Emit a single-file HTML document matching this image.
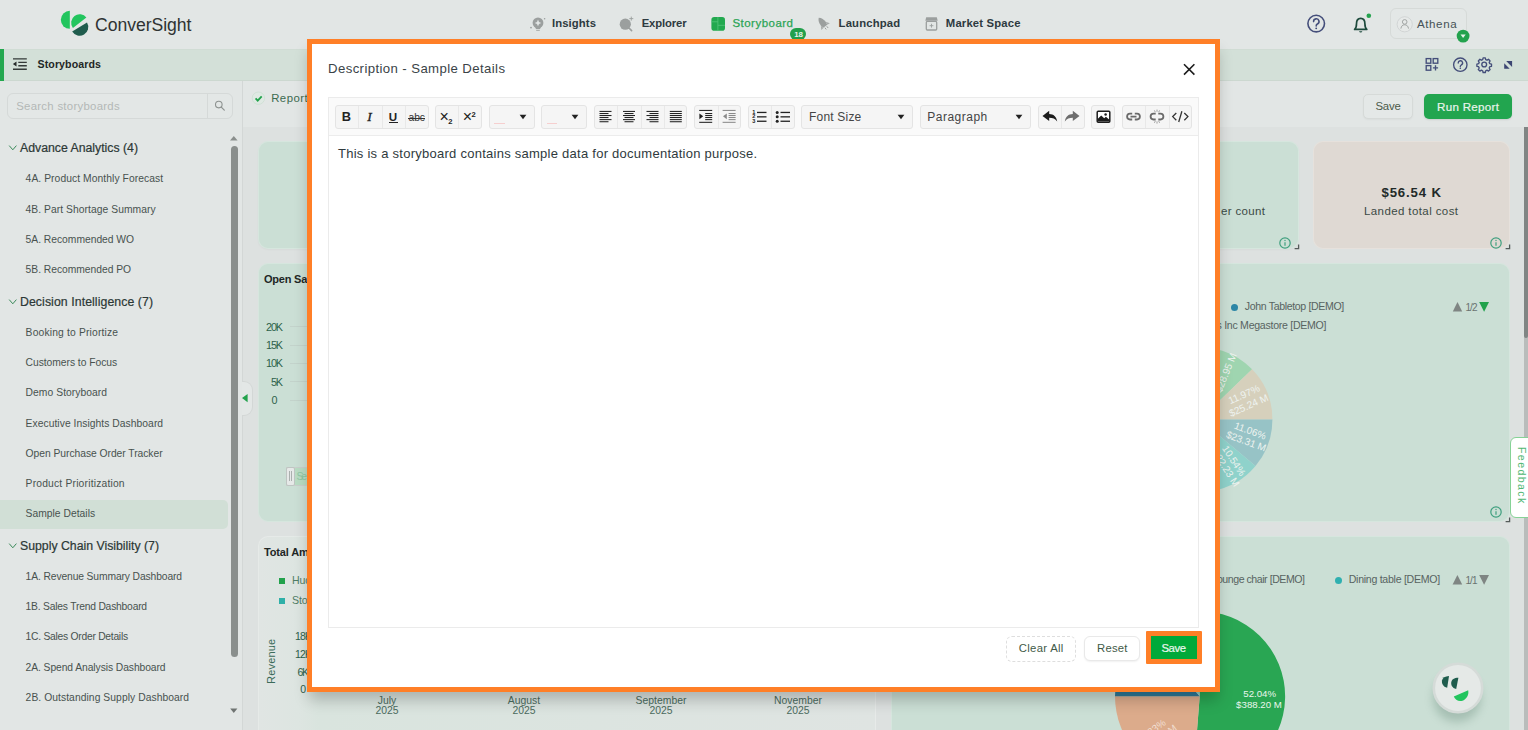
<!DOCTYPE html>
<html><head><meta charset="utf-8"><title>ConverSight</title>
<style>
*{box-sizing:border-box;margin:0;padding:0}
html,body{width:1528px;height:730px;overflow:hidden}
body{font-family:"Liberation Sans",sans-serif;background:#e2e6e5;color:#3a4340;position:relative}
.abs{position:absolute}
.t{position:absolute;white-space:nowrap;line-height:1}
svg{position:absolute;overflow:visible}
#hdr{left:0;top:0;width:1528px;height:48px;background:#e2e6e5}
#sub{left:0;top:48.600px;width:1528px;height:32px;background:#d3e0d8;border-top:1px solid #d0dcd4;border-bottom:1px solid #ccd8d0}
#sub .strip{left:0;top:-1px;width:4px;height:32px;background:#23a84f}
#side{left:0;top:80.600px;width:243px;height:650px;background:#e2e6e5;border-right:1px solid #d3d7d6}
#canvas{left:243px;top:127px;width:1285px;height:603px;background:#dde1e0}
.card{position:absolute;background:#cbdfd5;border-radius:10px;border:1px solid rgba(255,255,255,.22)}
.tb{position:absolute;top:105px;height:23.500px;background:#f5f5f5;border:1px solid #e4e4e4;border-radius:3px}
.tb i{position:absolute;top:0;width:1px;height:22px;background:#e8e8e8}
</style></head><body>
<div id="hdr" class="abs"></div>
<div id="sub" class="abs"><div class="strip abs"></div></div>
<div id="side" class="abs"></div>
<div id="canvas" class="abs"></div>
<svg style="left:58px;top:8px" width="32" height="32" viewBox="58 8 32 32">
<path d="M69.8 10.8 A9 9 0 0 0 69.8 28.8 Z" fill="#22c55e"/>
<path d="M72.9 27.9 A8 8 0 0 1 86.4 17.6 Z" fill="#22c55e"/>
<path d="M87.0 22.6 A8 8 0 0 1 72.2 31.5 Z" fill="#1f5c4d"/>
</svg>
<div class="t " style="left:95.00px;top:17.00px;font-size:17.6px;color:#2f3333;letter-spacing:-0.033px;">ConverSight</div>
<svg style="left:528px;top:14px" width="20" height="20" viewBox="528 14 20 20">
<circle cx="538" cy="22.900" r="5.400" fill="#9b9f9e"/><path d="M535.200 26.500h5.600l-.7 2.500h-4.200z" fill="#9b9f9e"/><path d="M536.200 30.300h3.600" stroke="#9b9f9e" stroke-width=".9"/>
<path d="M538 19.600l1 2.300 2.300 1-2.300 1-1 2.300-1-2.300-2.300-1 2.300-1z" fill="#e2e6e5"/>
<circle cx="531" cy="27.600" r=".9" fill="#9b9f9e"/><circle cx="544.600" cy="18.700" r=".8" fill="#9b9f9e"/>
</svg>
<div class="t " style="left:552.00px;top:18.00px;font-size:11.3px;color:#2e3a40;font-weight:bold;letter-spacing:0.098px;">Insights</div>
<svg style="left:617px;top:14px" width="20" height="20" viewBox="617 14 20 20">
<circle cx="625.3" cy="24.2" r="5.6" fill="#9b9f9e"/><path d="M629 28l2.6 2.6" stroke="#9b9f9e" stroke-width="1.6" stroke-linecap="round"/>
<path d="M631.3 16.6v4M629.3 18.6h4" stroke="#9b9f9e" stroke-width=".9"/>
</svg>
<div class="t " style="left:641.70px;top:18.00px;font-size:11.3px;color:#2e3a40;font-weight:bold;letter-spacing:-0.121px;">Explorer</div>
<svg style="left:710.5px;top:17px" width="14" height="14" viewBox="0 0 14 14">
<rect x=".4" y=".1" width="13.6" height="13.6" rx="2.8" fill="#22a94f"/>
<path d="M6.9 .1v13.6M.4 4.800h6.500M6.900 8.300h7.100" stroke="#55c57b" stroke-width=".8"/>
</svg>
<div class="t " style="left:732.40px;top:18.00px;font-size:11.5px;color:#2aa455;letter-spacing:0.482px;-webkit-text-stroke:.25px #2aa455;">Storyboard</div>
<div class="abs" style="left:790.300px;top:27.800px;width:16.200px;height:12.500px;border-radius:6.200px;background:#22a04c"></div>
<div class="t " style="left:794.20px;top:31.00px;font-size:7.9px;color:#e8f3ec;font-weight:bold;letter-spacing:-0.181px;">18</div>
<svg style="left:816px;top:15px" width="16" height="16" viewBox="816 15 16 16">
<g transform="rotate(-38 823.500 24)"><path d="M823.500 16.200c2.300 1.900 3.100 4.600 3.100 7.400l-.6 3.200h-5l-.6-3.200c0-2.800.8-5.500 3.100-7.400z" fill="#9b9f9e"/>
<path d="M820.400 23.600l-2.300 3.800 2.900-.4zM826.600 23.600l2.300 3.800-2.900-.4z" fill="#a9adac"/>
<path d="M822.300 27.800v2.200M824.700 27.800v2.200" stroke="#9b9f9e" stroke-width=".9"/></g>
</svg>
<div class="t " style="left:838.60px;top:18.00px;font-size:11.3px;color:#2e3a40;font-weight:bold;letter-spacing:0.167px;">Launchpad</div>
<svg style="left:924px;top:15px" width="16" height="18" viewBox="924 15 16 18">
<path d="M926.200 17.300h10.600l.9 3.400h-12.400z" fill="#9b9f9e"/>
<rect x="926.300" y="21.400" width="10.400" height="8.600" rx="1" fill="none" stroke="#9b9f9e" stroke-width="1.300"/>
<path d="M931.500 23.800v3.800M929.600 25.700h3.800" stroke="#9b9f9e" stroke-width=".9"/>
</svg>
<div class="t " style="left:945.80px;top:18.00px;font-size:11.3px;color:#2e3a40;font-weight:bold;letter-spacing:0.169px;">Market Space</div>
<svg style="left:1305px;top:12px" width="24" height="24" viewBox="1305 12 24 24">
<circle cx="1316.200" cy="23.600" r="8.300" fill="none" stroke="#444e7a" stroke-width="1.600"/>
<path d="M1313.600 21.600a2.700 2.700 0 1 1 3.800 2.400c-.9.500-1.200 1-1.200 1.900" fill="none" stroke="#444e7a" stroke-width="1.600" stroke-linecap="round"/>
<circle cx="1316.200" cy="28.300" r=".9" fill="#3c4672"/>
</svg>
<svg style="left:1350px;top:10px" width="24" height="26" viewBox="1350 10 24 26">
<path d="M1354.600 29.400c1.600-1.300 1.900-2.600 1.900-5.600 0-3.300 1.700-5.400 4.200-5.400s4.200 2.100 4.200 5.400c0 3 .3 4.300 1.900 5.600z" fill="none" stroke="#1d4a3c" stroke-width="1.700" stroke-linejoin="round"/>
<path d="M1359 31.200a1.800 1.800 0 0 0 3.400 0z" fill="#1d4a3c"/>
<circle cx="1368.800" cy="15.800" r="2.300" fill="#23a24d"/>
</svg>
<div class="abs" style="left:1390px;top:8px;width:77px;height:31px;border:1px solid #d6dad8;border-radius:6px;background:#e3e7e6"></div>
<svg style="left:1396px;top:15px" width="18" height="18" viewBox="1396 15 18 18">
<circle cx="1404.700" cy="24.300" r="7.600" fill="#e6e9e8" stroke="#cfd3d2" stroke-width=".9"/>
<circle cx="1404.700" cy="21.900" r="2.300" fill="none" stroke="#9a9e9d" stroke-width=".9"/>
<path d="M1400.900 28.600c.3-2.600 1.800-3.800 3.800-3.800s3.500 1.200 3.800 3.800" fill="none" stroke="#9a9e9d" stroke-width=".9"/>
</svg>
<div class="t " style="left:1417.00px;top:18.00px;font-size:11.6px;color:#465256;letter-spacing:0.570px;">Athena</div>
<svg style="left:1456px;top:29px" width="14" height="14" viewBox="1456 29 14 14">
<circle cx="1463.100" cy="36.100" r="6.400" fill="#23a24d"/><path d="M1460.500 34.400h5.200l-2.600 3.700z" fill="#e8f3ec"/>
</svg>
<svg style="left:11px;top:56px" width="18" height="16" viewBox="11 56 18 16">
<path d="M13 58.800h13.800M18.300 62.300h8.500M18.300 65.700h8.500M13 69.200h13.800" stroke="#353a39" stroke-width="1.350"/>
<path d="M16.500 61.400v5.200l-3.600-2.600z" fill="#262b2a"/>
</svg>
<div class="t " style="left:37.50px;top:59.00px;font-size:10.6px;color:#1f2726;font-weight:bold;letter-spacing:0.109px;">Storyboards</div>
<svg style="left:1424px;top:56px" width="96" height="18" viewBox="1424 56 96 18">
<g fill="none" stroke="#444e7a" stroke-width="1.350">
<rect x="1426.200" y="58.600" width="4.600" height="4.600"/><rect x="1433.200" y="58.600" width="4.600" height="4.600"/><rect x="1426.200" y="65.600" width="4.600" height="4.600"/>
<path d="M1435.500 65.300v5.200M1432.900 67.900h5.200"/>
<circle cx="1460.300" cy="64.700" r="6.700"/>
<path d="M1458.200 63a2.200 2.200 0 1 1 3 2c-.7.400-.9.800-.9 1.500" stroke-linecap="round"/>
<circle cx="1484.200" cy="64.500" r="2.400"/>
<path d="M1483.100 57.900h2.200l.4 1.700 1.300.6 1.500-.9 1.600 1.600-.9 1.500.6 1.300 1.700.4v2.200l-1.700.4-.6 1.300.9 1.500-1.600 1.600-1.500-.9-1.300.6-.4 1.700h-2.200l-.4-1.700-1.300-.6-1.500.9-1.600-1.600.9-1.500-.6-1.300-1.700-.4v-2.200l1.700-.4.600-1.300-.9-1.500 1.600-1.600 1.500.9 1.300-.6z" stroke-linejoin="round"/>
</g>
<circle cx="1460.300" cy="68.300" r=".8" fill="#3c4672"/>
<path d="M1506.200 61h5.900v5.900zM1504.200 63.200v5.500h5.500z" fill="#3c4672"/>
</svg>
<div class="abs" style="left:7px;top:93px;width:225.500px;height:26px;border:1px solid #d5d9d8;border-radius:6px;background:#e3e7e6"></div>
<div class="abs" style="left:207px;top:94px;width:1px;height:24px;background:#d5d9d8"></div>
<div class="t " style="left:16.20px;top:101.00px;font-size:11.4px;color:#b3b8b6;letter-spacing:0.278px;">Search storyboards</div>
<svg style="left:213px;top:99px" width="14" height="14" viewBox="213 99 14 14">
<circle cx="218.800" cy="104.600" r="3.300" fill="none" stroke="#8d9290" stroke-width="1.100"/><path d="M221.300 107.100l3 3" stroke="#8d9290" stroke-width="1.200" stroke-linecap="round"/></svg>
<div class="abs" style="left:0;top:500px;width:228px;height:29px;background:#d1dfd6;border-radius:0 5px 5px 0"></div>
<svg style="left:8px;top:144px" width="10" height="8" viewBox="0 0 10 8"><path d="M1.200 1.600l3.600 4.200 3.600-4.200" fill="none" stroke="#3a8a5a" stroke-width="1"/></svg>
<div class="t " style="left:20.00px;top:142.00px;font-size:12.3px;color:#2c3836;letter-spacing:-0.013px;-webkit-text-stroke:.2px #2c3836;">Advance Analytics (4)</div>
<svg style="left:8px;top:298px" width="10" height="8" viewBox="0 0 10 8"><path d="M1.200 1.600l3.600 4.200 3.600-4.200" fill="none" stroke="#3a8a5a" stroke-width="1"/></svg>
<div class="t " style="left:20.00px;top:296.00px;font-size:12.3px;color:#2c3836;letter-spacing:0.074px;-webkit-text-stroke:.2px #2c3836;">Decision Intelligence (7)</div>
<svg style="left:8px;top:542px" width="10" height="8" viewBox="0 0 10 8"><path d="M1.200 1.600l3.600 4.200 3.600-4.200" fill="none" stroke="#3a8a5a" stroke-width="1"/></svg>
<div class="t " style="left:20.00px;top:540.00px;font-size:12.3px;color:#2c3836;letter-spacing:-0.008px;-webkit-text-stroke:.2px #2c3836;">Supply Chain Visibility (7)</div>
<div class="t " style="left:25.60px;top:174.00px;font-size:10.3px;color:#48524f;letter-spacing:0.069px;">4A. Product Monthly Forecast</div>
<div class="t " style="left:25.60px;top:205.00px;font-size:10.3px;color:#48524f;letter-spacing:0.051px;">4B. Part Shortage Summary</div>
<div class="t " style="left:25.60px;top:235.00px;font-size:10.3px;color:#48524f;letter-spacing:-0.014px;">5A. Recommended WO</div>
<div class="t " style="left:25.60px;top:265.00px;font-size:10.3px;color:#48524f;letter-spacing:-0.023px;">5B. Recommended PO</div>
<div class="t " style="left:25.60px;top:328.00px;font-size:10.3px;color:#48524f;letter-spacing:0.169px;">Booking to Priortize</div>
<div class="t " style="left:25.60px;top:358.00px;font-size:10.3px;color:#48524f;letter-spacing:-0.038px;">Customers to Focus</div>
<div class="t " style="left:25.60px;top:388.00px;font-size:10.3px;color:#48524f;letter-spacing:0.057px;">Demo Storyboard</div>
<div class="t " style="left:25.60px;top:419.00px;font-size:10.3px;color:#48524f;letter-spacing:0.047px;">Executive Insights Dashboard</div>
<div class="t " style="left:25.60px;top:449.00px;font-size:10.3px;color:#48524f;letter-spacing:-0.035px;">Open Purchase Order Tracker</div>
<div class="t " style="left:25.60px;top:479.00px;font-size:10.3px;color:#48524f;letter-spacing:0.190px;">Product Prioritization</div>
<div class="t " style="left:25.60px;top:509.00px;font-size:10.3px;color:#48524f;letter-spacing:0.019px;">Sample Details</div>
<div class="t " style="left:25.60px;top:572.00px;font-size:10.3px;color:#48524f;letter-spacing:-0.114px;">1A. Revenue Summary Dashboard</div>
<div class="t " style="left:25.60px;top:602.00px;font-size:10.3px;color:#48524f;letter-spacing:-0.208px;">1B. Sales Trend Dashboard</div>
<div class="t " style="left:25.60px;top:632.00px;font-size:10.3px;color:#48524f;letter-spacing:-0.258px;">1C. Sales Order Details</div>
<div class="t " style="left:25.60px;top:663.00px;font-size:10.3px;color:#48524f;letter-spacing:-0.073px;">2A. Spend Analysis Dashboard</div>
<div class="t " style="left:25.60px;top:693.00px;font-size:10.3px;color:#48524f;letter-spacing:0.067px;">2B. Outstanding Supply Dashboard</div>
<div class="abs" style="left:230.500px;top:146px;width:7px;height:511px;border-radius:3.500px;background:#8a8f8d"></div>
<svg style="left:229px;top:134px" width="10" height="8" viewBox="0 0 10 8"><path d="M1 6.500h7.600l-3.800-4.600z" fill="#8a8f8d"/></svg>
<svg style="left:229px;top:707px" width="10" height="8" viewBox="0 0 10 8"><path d="M1.200 1.500h7.200l-3.600 4.600z" fill="#6f7472"/></svg>
<div class="abs" style="left:242px;top:381px;width:11px;height:35px;background:#e3e7e6;border:1px solid #d3d7d6;border-left:none;border-radius:0 9px 9px 0"></div>
<svg style="left:241px;top:393px" width="8" height="10" viewBox="0 0 8 10"><path d="M6.600 1v8.200l-5.600-4.100z" fill="#22a24c"/></svg>
<svg style="left:251px;top:91px" width="16" height="16" viewBox="251 91 16 16">
<circle cx="258.400" cy="98.200" r="6.200" fill="#dfe9e3" stroke="#cfe0d5" stroke-width=".9"/>
<path d="M255.600 98.400l2.100 2.200 4-4.300" fill="none" stroke="#22a24c" stroke-width="1.800"/></svg>
<div class="t " style="left:271.20px;top:93.00px;font-size:11.4px;color:#3d6b50;letter-spacing:0.459px;">Report</div>
<div class="abs" style="left:1362.500px;top:93.500px;width:50.500px;height:25.500px;border:1px solid #d6dad8;border-radius:5px;background:#e4e8e7;box-shadow:0 1px 2px rgba(0,0,0,.04)"></div>
<div class="t " style="left:1375.40px;top:101.00px;font-size:11.4px;color:#4b5a4a;letter-spacing:-0.190px;">Save</div>
<div class="abs" style="left:1424px;top:93.500px;width:87.500px;height:25.500px;border-radius:5px;background:#22a54f;box-shadow:0 1px 2px rgba(0,0,0,.1)"></div>
<div class="t " style="left:1437.00px;top:101.00px;font-size:11.6px;color:#e9f4ec;letter-spacing:0.300px;-webkit-text-stroke:.2px #e9f4ec;">Run Report</div>
<div class="abs" style="left:1524px;top:127px;width:4px;height:603px;background:#b9bcbb"></div>
<div class="abs" style="left:1524px;top:127px;width:4px;height:211px;background:#808584;border-radius:0 0 2px 2px"></div>
<div class="card" style="left:258px;top:141px;width:1041px;height:108px;box-shadow:0 1px 2px rgba(0,0,0,.03)"></div>
<div class="card" style="left:1313px;top:141px;width:197px;height:108px;background:#dfd9d3"></div>
<div class="t " style="left:1221.00px;top:206.00px;font-size:11.5px;color:#3b4a45;letter-spacing:0.348px;">er count</div>
<div class="t " style="left:1381.50px;top:186.00px;font-size:13.2px;color:#222a28;font-weight:bold;letter-spacing:0.853px;">$56.54 K</div>
<div class="t " style="left:1364.00px;top:206.00px;font-size:11.5px;color:#3b4a45;letter-spacing:0.400px;">Landed total cost</div>
<svg style="left:1278.9px;top:236.9px" width="12" height="12" viewBox="0 0 12 12"><circle cx="6" cy="6" r="5.200" fill="none" stroke="#3f9f7e" stroke-width="1.200"/><path d="M6 5.300v3.500" stroke="#3f9f7e" stroke-width="1.200"/><circle cx="6" cy="3.500" r=".7" fill="#3f9f7e"/></svg>
<svg style="left:1294.1px;top:243.9px" width="6" height="6" viewBox="0 0 6 6"><path d="M.6 4.600h4v-4" fill="none" stroke="#555c5a" stroke-width="1.300"/></svg>
<svg style="left:1490.0px;top:236.9px" width="12" height="12" viewBox="0 0 12 12"><circle cx="6" cy="6" r="5.200" fill="none" stroke="#3f9f7e" stroke-width="1.200"/><path d="M6 5.300v3.500" stroke="#3f9f7e" stroke-width="1.200"/><circle cx="6" cy="3.500" r=".7" fill="#3f9f7e"/></svg>
<svg style="left:1505.1px;top:243.9px" width="6" height="6" viewBox="0 0 6 6"><path d="M.6 4.600h4v-4" fill="none" stroke="#555c5a" stroke-width="1.300"/></svg>
<div class="card" style="left:258px;top:263px;width:618px;height:259px"></div>
<div class="card" style="left:891px;top:263px;width:619px;height:259px"></div>
<div class="t " style="left:264.00px;top:274.00px;font-size:11px;color:#1f2726;font-weight:bold;letter-spacing:-0.214px;">Open Sales</div>
<div class="t " style="left:266.00px;top:322.00px;font-size:10.8px;color:#2d5f4a;letter-spacing:-1.109px;">20K</div>
<div class="abs" style="left:290px;top:326.0px;width:20px;height:1px;background:#c3d3cb"></div>
<div class="t " style="left:266.00px;top:340.00px;font-size:10.8px;color:#2d5f4a;letter-spacing:-1.109px;">15K</div>
<div class="abs" style="left:290px;top:344.5px;width:20px;height:1px;background:#c3d3cb"></div>
<div class="t " style="left:266.00px;top:358.00px;font-size:10.8px;color:#2d5f4a;letter-spacing:-1.109px;">10K</div>
<div class="abs" style="left:290px;top:362.5px;width:20px;height:1px;background:#c3d3cb"></div>
<div class="t " style="left:271.00px;top:377.00px;font-size:10.8px;color:#2d5f4a;letter-spacing:-1.219px;">5K</div>
<div class="abs" style="left:290px;top:381.0px;width:20px;height:1px;background:#c3d3cb"></div>
<div class="t " style="left:271.50px;top:395.00px;font-size:10.8px;color:#2d5f4a;letter-spacing:-0.516px;">0</div>
<div class="abs" style="left:290px;top:399.5px;width:20px;height:1px;background:#c3d3cb"></div>
<div class="abs" style="left:285.500px;top:466.500px;width:30px;height:19px;background:#b9dcc4;border:1px solid #c9cfcc"></div>
<div class="abs" style="left:285.500px;top:466.500px;width:9.500px;height:19px;background:#e6e9e8;border:1px solid #bfc5c2;border-radius:2px"></div>
<div class="abs" style="left:288.500px;top:471px;width:1px;height:10px;background:#aab0ae"></div><div class="abs" style="left:291px;top:471px;width:1px;height:10px;background:#aab0ae"></div>
<div class="t " style="left:296.50px;top:471.00px;font-size:10.5px;color:#8fc7a3;letter-spacing:-2.344px;">Se</div>
<div class="abs" style="left:1231px;top:303.500px;width:7px;height:7px;border-radius:50%;background:#2c86a6"></div>
<div class="t " style="left:1244.80px;top:301.00px;font-size:10.6px;color:#586361;letter-spacing:-0.363px;">John Tabletop [DEMO]</div>
<div class="t " style="left:1216.50px;top:320.00px;font-size:10.6px;color:#586361;letter-spacing:-0.285px;">s Inc Megastore [DEMO]</div>
<svg style="left:1451px;top:300px" width="40" height="13" viewBox="1451 300 40 13"><path d="M1452.800 311.500h9.400l-4.700-9.500z" fill="#7f8583"/><path d="M1479.200 302h9.800l-4.900 9.700z" fill="#22a24c"/></svg>
<div class="t " style="left:1465.50px;top:303.00px;font-size:10px;color:#6a7371;letter-spacing:-0.953px;">1/2</div>
<svg style="left:0;top:0" width="1528" height="730" viewBox="0 0 1528 730"><path d="M1200.0 419.5L1187.4 348.2A72.4 72.4 0 0 1 1252.1 369.2Z" fill="#9fd5b0" /><path d="M1200.0 419.5L1252.1 369.2A72.4 72.4 0 0 1 1272.4 419.5Z" fill="#d6d0bc" /><path d="M1200.0 419.5L1272.4 419.5A72.4 72.4 0 0 1 1255.5 466.0Z" fill="#97c3c6" /><path d="M1200.0 419.5L1255.5 466.0A72.4 72.4 0 0 1 1212.6 490.8Z" fill="#8fd2cb" /><path d="M1200.0 419.5L1212.6 490.8A72.4 72.4 0 0 1 1132.0 394.7Z" fill="#7fb0a0" /><text x="1229.0" y="374.0" transform="rotate(-68 1229.0 374.0)" font-size="10" fill="#eef3f0" font-weight="normal" text-anchor="middle" font-family="Liberation Sans,sans-serif">$28.95 M</text><text x="1245.5" y="397.5" transform="rotate(-24 1245.5 397.5)" font-size="10" fill="#eef3f0" font-weight="normal" text-anchor="middle" font-family="Liberation Sans,sans-serif">11.97%</text><text x="1250.0" y="408.5" transform="rotate(-24 1250.0 408.5)" font-size="10" fill="#eef3f0" font-weight="normal" text-anchor="middle" font-family="Liberation Sans,sans-serif">$25.24 M</text><text x="1249.0" y="434.0" transform="rotate(20 1249.0 434.0)" font-size="10" fill="#eef3f0" font-weight="normal" text-anchor="middle" font-family="Liberation Sans,sans-serif">11.06%</text><text x="1245.0" y="444.5" transform="rotate(20 1245.0 444.5)" font-size="10" fill="#eef3f0" font-weight="normal" text-anchor="middle" font-family="Liberation Sans,sans-serif">$23.31 M</text><text x="1231.0" y="462.5" transform="rotate(57 1231.0 462.5)" font-size="10" fill="#eef3f0" font-weight="normal" text-anchor="middle" font-family="Liberation Sans,sans-serif">10.54%</text><text x="1223.0" y="470.0" transform="rotate(57 1223.0 470.0)" font-size="10" fill="#eef3f0" font-weight="normal" text-anchor="middle" font-family="Liberation Sans,sans-serif">$22.23 M</text></svg>
<svg style="left:1490.0px;top:506.2px" width="12" height="12" viewBox="0 0 12 12"><circle cx="6" cy="6" r="5.200" fill="none" stroke="#3f9f7e" stroke-width="1.200"/><path d="M6 5.300v3.500" stroke="#3f9f7e" stroke-width="1.200"/><circle cx="6" cy="3.500" r=".7" fill="#3f9f7e"/></svg>
<svg style="left:1505.1px;top:517.0px" width="6" height="6" viewBox="0 0 6 6"><path d="M.6 4.600h4v-4" fill="none" stroke="#555c5a" stroke-width="1.300"/></svg>
<div class="abs" style="left:1510px;top:437px;width:20px;height:81px;background:#fff;border:1.500px solid #86d296;border-radius:6px 0 0 6px"></div>
<div class="t" style="left:1515.500px;top:447px;font-size:10.500px;letter-spacing:1.450px;color:#52b774;writing-mode:vertical-rl;line-height:12px">Feedback</div>
<div class="card" style="left:258px;top:536px;width:618px;height:220px;background:linear-gradient(90deg,#e0e5e3 0,#dde5e1 40px,#d9e4de 60px,#dfe4e2 100%)"></div>
<div class="card" style="left:891px;top:536px;width:619px;height:220px"></div>
<div class="t " style="left:264.00px;top:547.00px;font-size:11px;color:#1f2726;font-weight:bold;letter-spacing:-0.151px;">Total Amount</div>
<div class="abs" style="left:278.600px;top:577.500px;width:6.600px;height:6.600px;background:#22a24c"></div>
<div class="abs" style="left:278.600px;top:597.800px;width:6.600px;height:6.600px;background:#2fb0a8"></div>
<div class="t " style="left:292.00px;top:575.00px;font-size:10.6px;color:#4f7d66;letter-spacing:-0.103px;">Hudson</div>
<div class="t " style="left:292.00px;top:595.00px;font-size:10.6px;color:#4f7d66;letter-spacing:-0.172px;">Stone</div>
<div class="t" style="left:265.500px;top:684px;font-size:11px;color:#3b6b59;letter-spacing:.2px;transform-origin:0 0;transform:rotate(-90deg)">Revenue</div>
<div class="t " style="left:295.00px;top:631.00px;font-size:10.5px;color:#2d5f4a;letter-spacing:-0.844px;">18K</div>
<div class="t " style="left:295.00px;top:649.00px;font-size:10.5px;color:#2d5f4a;letter-spacing:-0.844px;">12K</div>
<div class="t " style="left:297.60px;top:667.00px;font-size:10.5px;color:#2d5f4a;letter-spacing:-1.344px;">6K</div>
<div class="t " style="left:300.30px;top:684.00px;font-size:10.5px;color:#2d5f4a;letter-spacing:-0.344px;">0</div>
<div class="t" style="left:337px;top:696px;width:100px;text-align:center;font-size:10.400px;line-height:9.800px;color:#4b6b5e;white-space:normal">July<br>2025</div>
<div class="t" style="left:474px;top:696px;width:100px;text-align:center;font-size:10.400px;line-height:9.800px;color:#4b6b5e;white-space:normal">August<br>2025</div>
<div class="t" style="left:611px;top:696px;width:100px;text-align:center;font-size:10.400px;line-height:9.800px;color:#4b6b5e;white-space:normal">September<br>2025</div>
<div class="t" style="left:748px;top:696px;width:100px;text-align:center;font-size:10.400px;line-height:9.800px;color:#4b6b5e;white-space:normal">November<br>2025</div>
<div class="t " style="left:1211.50px;top:574.00px;font-size:10.6px;color:#586361;letter-spacing:-0.465px;">Lounge chair [DEMO]</div>
<div class="abs" style="left:1334.500px;top:576.800px;width:7px;height:7px;border-radius:50%;background:#2fb0b0"></div>
<div class="t " style="left:1348.70px;top:574.00px;font-size:10.6px;color:#586361;letter-spacing:-0.281px;">Dining table [DEMO]</div>
<svg style="left:1451px;top:573px" width="40" height="13" viewBox="1451 573 40 13"><path d="M1452.600 584.500h9.600l-4.800-9.500z" fill="#7f8583"/><path d="M1479.200 575h9.800l-4.900 9.700z" fill="#7f8583"/></svg>
<div class="t " style="left:1465.50px;top:576.00px;font-size:10px;color:#6a7371;letter-spacing:-0.953px;">1/1</div>
<svg style="left:0;top:0" width="1528" height="730" viewBox="0 0 1528 730"><path d="M1199.7 696.2L1196.7 611.6A84.7 84.7 0 1 1 1193.1 780.6Z" fill="#29a653" /><path d="M1199.7 696.2L1193.1 780.6A84.7 84.7 0 0 1 1115.0 696.2Z" fill="#dcab8b" /><path d="M1199.7 696.2L1115.0 696.2A84.7 84.7 0 0 1 1145.3 631.3Z" fill="#2f7a98" /><path d="M1199.7 696.2L1145.3 631.3A84.7 84.7 0 0 1 1196.7 611.6Z" fill="#8fd2cb" /><text x="1259.7" y="697.3" transform="rotate(0 1259.7 697.3)" font-size="9.7" fill="#e9f6ed" font-weight="normal" text-anchor="middle" font-family="Liberation Sans,sans-serif">52.04%</text><text x="1259.0" y="708.3" transform="rotate(0 1259.0 708.3)" font-size="9.7" fill="#e9f6ed" font-weight="normal" text-anchor="middle" font-family="Liberation Sans,sans-serif">$388.20 M</text><text x="1153.0" y="734.0" transform="rotate(-36 1153.0 734.0)" font-size="9.8" fill="#f1dfd2" font-weight="normal" text-anchor="middle" font-family="Liberation Sans,sans-serif">26.83%</text><text x="1159.0" y="743.0" transform="rotate(-36 1159.0 743.0)" font-size="9.8" fill="#f1dfd2" font-weight="normal" text-anchor="middle" font-family="Liberation Sans,sans-serif">$200.13 M</text></svg>
<svg style="left:1425px;top:655px" width="66" height="70" viewBox="1425 655 66 70">
<defs><filter id="sh" x="-40%" y="-40%" width="180%" height="180%"><feGaussianBlur stdDeviation="5"/></filter></defs>
<circle cx="1457" cy="698" r="24" fill="#4f7563" opacity=".30" filter="url(#sh)"/>
<circle cx="1458" cy="688" r="24.200" fill="#e5e9e7" stroke="#d5dbd8" stroke-width="2.600"/>
<path d="M1449 676.100L1447.200 687.800C1443 687 1441.500 683.400 1442 680.600C1442.500 678 1445 676.200 1449 676.100Z" fill="#1f5c4d"/>
<path d="M1458.400 677.700L1456.200 688.900C1452 688.200 1450.800 684.600 1451.300 682C1451.800 679.500 1454 677.700 1458.400 677.700Z" fill="#1f5c4d"/>
<path d="M1453.800 696.600L1468.200 690.300C1469.200 695 1466.200 700 1461.600 701C1458 701.600 1455 699.600 1453.800 696.600Z" fill="#22c55e"/>
</svg>
<div class="abs" style="left:307px;top:39px;width:913px;height:653px;background:#fff;border:5px solid #ff7f27;box-shadow:0 10px 14px -2px rgba(0,0,0,.22)"></div>
<div class="t " style="left:328.00px;top:62.00px;font-size:13.2px;color:#3a4347;letter-spacing:0.394px;">Description - Sample Details</div>
<svg style="left:1182px;top:62px" width="14" height="14" viewBox="1182 62 14 14"><path d="M1184 64.200l10.400 10.400M1194.400 64.200l-10.400 10.400" stroke="#1d1d1d" stroke-width="1.600"/></svg>
<div class="abs" style="left:328px;top:97.400px;width:870.800px;height:530.300px;border:1px solid #ebebeb;background:#fff"></div>
<div class="abs" style="left:329px;top:98.400px;width:868.800px;height:37.200px;background:#fafafa;border-bottom:1px solid #ececec"></div>
<div class="tb" style="left:335.0px;width:93.7px"><i style="left:22.4px"></i><i style="left:45.8px"></i><i style="left:69.2px"></i></div>
<div class="tb" style="left:435.0px;width:46.7px"><i style="left:22.4px"></i></div>
<div class="tb" style="left:488.7px;width:46.0px"></div>
<div class="tb" style="left:541.2px;width:46.2px"></div>
<div class="tb" style="left:594.2px;width:93.3px"><i style="left:22.0px"></i><i style="left:45.4px"></i><i style="left:68.8px"></i></div>
<div class="tb" style="left:694.2px;width:46.4px"><i style="left:22.4px"></i></div>
<div class="tb" style="left:747.7px;width:47.2px"><i style="left:22.0px"></i></div>
<div class="tb" style="left:801.3px;width:111.7px"></div>
<div class="tb" style="left:919.5px;width:111.7px"></div>
<div class="tb" style="left:1037.5px;width:47.5px"><i style="left:22.8px"></i></div>
<div class="tb" style="left:1091.2px;width:24.2px"></div>
<div class="tb" style="left:1121.7px;width:70.7px"><i style="left:22.6px"></i><i style="left:46.2px"></i></div>
<div class="t " style="left:341.80px;top:111.00px;font-size:12.8px;color:#222;font-weight:bold;letter-spacing:-0.250px;">B</div>
<div class="t " style="left:367.20px;top:110.00px;font-size:13.5px;color:#222;letter-spacing:1.234px;font-family:Liberation Serif,serif;font-style:italic;-webkit-text-stroke:.3px #222;">I</div>
<div class="t " style="left:388.80px;top:111.00px;font-size:11.6px;color:#222;font-weight:bold;letter-spacing:0.625px;">U</div>
<div class="abs" style="left:388.500px;top:122px;width:9.500px;height:1.300px;background:#222"></div>
<div class="t " style="left:408.50px;top:113.00px;font-size:10.3px;color:#333;letter-spacing:-0.055px;">abc</div>
<div class="abs" style="left:408.300px;top:117.600px;width:16.500px;height:1px;background:#333"></div>
<div class="t " style="left:439.60px;top:109.00px;font-size:16px;color:#222;letter-spacing:-0.344px;">×</div>
<div class="t " style="left:448.30px;top:118.00px;font-size:7.6px;color:#222;font-weight:bold;letter-spacing:0.266px;">2</div>
<div class="t " style="left:462.80px;top:109.00px;font-size:16px;color:#222;letter-spacing:-0.344px;">×</div>
<div class="t " style="left:471.60px;top:111.00px;font-size:7.6px;color:#222;font-weight:bold;letter-spacing:0.266px;">2</div>
<div class="abs" style="left:494px;top:123px;width:10.500px;height:1px;background:#f6cfcf"></div>
<div class="abs" style="left:546.500px;top:123px;width:10.500px;height:1px;background:#f6cfcf"></div>
<svg style="left:518.6px;top:113.6px" width="8" height="6" viewBox="0 0 8 6"><path d="M.6 .8h6.800l-3.400 4.400z" fill="#222"/></svg>
<svg style="left:571.2px;top:113.6px" width="8" height="6" viewBox="0 0 8 6"><path d="M.6 .8h6.800l-3.400 4.400z" fill="#222"/></svg>
<svg style="left:897.0px;top:113.6px" width="8" height="6" viewBox="0 0 8 6"><path d="M.6 .8h6.800l-3.400 4.400z" fill="#222"/></svg>
<svg style="left:1015.3px;top:113.6px" width="8" height="6" viewBox="0 0 8 6"><path d="M.6 .8h6.800l-3.400 4.400z" fill="#222"/></svg>
<svg style="left:0;top:0" width="1528" height="730" viewBox="0 0 1528 730"><rect x="599.5" y="110.9" width="12.0" height="1.050" fill="#222"/><rect x="599.5" y="113.0" width="9.0" height="1.050" fill="#222"/><rect x="599.5" y="115.0" width="12.0" height="1.050" fill="#222"/><rect x="599.5" y="117.0" width="9.0" height="1.050" fill="#222"/><rect x="599.5" y="119.1" width="12.0" height="1.050" fill="#222"/><rect x="599.5" y="121.2" width="9.0" height="1.050" fill="#222"/><rect x="623.0" y="110.9" width="12.0" height="1.050" fill="#222"/><rect x="624.5" y="113.0" width="9.0" height="1.050" fill="#222"/><rect x="623.0" y="115.0" width="12.0" height="1.050" fill="#222"/><rect x="624.5" y="117.0" width="9.0" height="1.050" fill="#222"/><rect x="623.0" y="119.1" width="12.0" height="1.050" fill="#222"/><rect x="624.5" y="121.2" width="9.0" height="1.050" fill="#222"/><rect x="646.5" y="110.9" width="12.0" height="1.050" fill="#222"/><rect x="649.5" y="113.0" width="9.0" height="1.050" fill="#222"/><rect x="646.5" y="115.0" width="12.0" height="1.050" fill="#222"/><rect x="649.5" y="117.0" width="9.0" height="1.050" fill="#222"/><rect x="646.5" y="119.1" width="12.0" height="1.050" fill="#222"/><rect x="649.5" y="121.2" width="9.0" height="1.050" fill="#222"/><rect x="669.8" y="110.9" width="12.0" height="1.050" fill="#222"/><rect x="669.8" y="113.0" width="12.0" height="1.050" fill="#222"/><rect x="669.8" y="115.0" width="12.0" height="1.050" fill="#222"/><rect x="669.8" y="117.0" width="12.0" height="1.050" fill="#222"/><rect x="669.8" y="119.1" width="12.0" height="1.050" fill="#222"/><rect x="669.8" y="121.2" width="12.0" height="1.050" fill="#222"/><rect x="699.2" y="109.9" width="13.0" height="1.050" fill="#222"/><rect x="705.2" y="113.0" width="7.0" height="1.050" fill="#222"/><rect x="705.2" y="115.0" width="7.0" height="1.050" fill="#222"/><rect x="705.2" y="117.0" width="7.0" height="1.050" fill="#222"/><rect x="705.2" y="119.1" width="7.0" height="1.050" fill="#222"/><rect x="699.2" y="121.8" width="13.0" height="1.050" fill="#222"/><path d="M699.400 113.400l3.800 2.900-3.800 2.900z" fill="#222"/><rect x="722.6" y="109.9" width="13.0" height="1.050" fill="#8a8a8a"/><rect x="728.6" y="113.0" width="7.0" height="1.050" fill="#8a8a8a"/><rect x="728.6" y="115.0" width="7.0" height="1.050" fill="#8a8a8a"/><rect x="728.6" y="117.0" width="7.0" height="1.050" fill="#8a8a8a"/><rect x="728.6" y="119.1" width="7.0" height="1.050" fill="#8a8a8a"/><rect x="722.6" y="121.8" width="13.0" height="1.050" fill="#8a8a8a"/><path d="M726.800 113.400l-3.800 2.900 3.800 2.900z" fill="#8a8a8a"/><rect x="757.0" y="111.8" width="9.5" height="1.300" fill="#222"/><rect x="757.0" y="116.2" width="9.5" height="1.300" fill="#222"/><rect x="757.0" y="120.6" width="9.5" height="1.300" fill="#222"/><rect x="780.5" y="111.8" width="9.5" height="1.300" fill="#222"/><rect x="780.5" y="116.2" width="9.5" height="1.300" fill="#222"/><rect x="780.5" y="120.6" width="9.5" height="1.300" fill="#222"/><circle cx="777.200" cy="112.400" r="1.500" fill="#222"/><circle cx="777.200" cy="116.800" r="1.500" fill="#222"/><circle cx="777.200" cy="121.200" r="1.500" fill="#222"/></svg>
<div class="t " style="left:752.30px;top:110.00px;font-size:5.6px;color:#222;font-weight:bold;letter-spacing:-0.225px;">1</div>
<div class="t " style="left:752.30px;top:114.00px;font-size:5.6px;color:#222;font-weight:bold;letter-spacing:-0.225px;">2</div>
<div class="t " style="left:752.30px;top:119.00px;font-size:5.6px;color:#222;font-weight:bold;letter-spacing:-0.225px;">3</div>
<div class="t " style="left:809.00px;top:111.00px;font-size:12px;color:#444;letter-spacing:0.200px;">Font Size</div>
<div class="t " style="left:927.30px;top:111.00px;font-size:12px;color:#444;letter-spacing:0.494px;">Paragraph</div>
<svg style="left:0;top:0" width="1528" height="730" viewBox="0 0 1528 730">
<path d="M1049.200 110.800v3.100c4.400.200 7.200 2.400 8 7.600-2-2.800-4.400-3.800-8-3.800v3.300l-6.700-5.100z" fill="#1c1c1c"/>
<path d="M1072.800 110.800v3.100c-4.400.200-7.200 2.400-8 7.600 2-2.800 4.400-3.800 8-3.800v3.300l6.700-5.100z" fill="#6d6d6d"/>
<rect x="1097.200" y="111.200" width="12.600" height="11" rx="1" fill="#fff" stroke="#1c1c1c" stroke-width="1.500"/>
<path d="M1097.600 121.600v-2.600l3.600-3.600 3 2.800 1.700-1.500 3.500 3v1.900z" fill="#1c1c1c"/><circle cx="1105.600" cy="114.400" r="1.250" fill="#1c1c1c"/>
<g fill="none" stroke="#6a6a6a" stroke-width="1.800">
<path d="M1132.200 113.700h-2.200a2.900 2.900 0 0 0 0 5.800h2.200M1134.800 113.700h2.200a2.900 2.900 0 0 1 0 5.800h-2.200M1130.500 116.600h6"/>
<path d="M1155.700 113.700h-2.200a2.900 2.900 0 0 0 0 5.800h2.200M1158.300 113.700h2.200a2.900 2.900 0 0 1 0 5.800h-2.200"/>
</g>
<path d="M1157 109.600v2.200M1154.400 110.400l.9 1.700M1159.600 110.400l-.9 1.700M1157 123.600v-2.200M1154.400 122.800l.9-1.700M1159.600 122.800l-.9-1.700" stroke="#8a8a8a" stroke-width=".8"/>
<path d="M1176.300 113l-3.600 3.600 3.600 3.600M1184.300 113l3.600 3.600-3.600 3.600M1181.900 111.200l-3.200 10.800" fill="none" stroke="#333" stroke-width="1.300"/>
</svg>
<div class="t " style="left:338.00px;top:147.00px;font-size:13px;color:#2f3a3d;letter-spacing:0.257px;">This is a storyboard contains sample data for documentation purpose.</div>
<div class="abs" style="left:1005.800px;top:635.800px;width:70.700px;height:26px;border:1px dashed #dedede;border-radius:6px;background:#fff"></div>
<div class="t " style="left:1018.80px;top:643.00px;font-size:11.3px;color:#3f5a48;letter-spacing:0.303px;">Clear All</div>
<div class="abs" style="left:1084.300px;top:636.200px;width:55.700px;height:25px;border:1px solid #e9e9e9;border-radius:6px;background:#fff;box-shadow:0 1px 2px rgba(0,0,0,.06)"></div>
<div class="t " style="left:1097.00px;top:643.00px;font-size:11.3px;color:#3f5a48;letter-spacing:0.246px;">Reset</div>
<div class="abs" style="left:1146px;top:631px;width:56px;height:33px;background:#00a93a;border:5px solid #ff7f27;border-radius:1px"></div>
<div class="t " style="left:1161.50px;top:643.00px;font-size:11.3px;color:#eaf7ee;letter-spacing:-0.417px;-webkit-text-stroke:.2px #eaf7ee;">Save</div>
</body></html>
